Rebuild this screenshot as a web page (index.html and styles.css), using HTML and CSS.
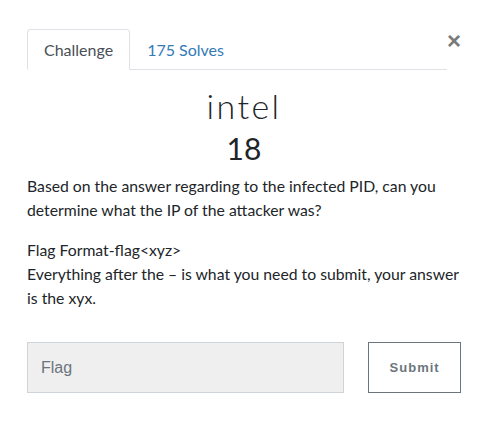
FILE: index.html
```html
<!DOCTYPE html>
<html>
<head>
<meta charset="utf-8">
<link rel="stylesheet" href="styles.css">
</head>
<body>
<div class="modal">
  <div class="header">
    <ul class="tabs">
      <li class="tab active">Challenge</li>
      <li class="tab link">175 Solves</li>
    </ul>
    <button class="close">&times;</button>
  </div>
  <h2 class="title">intel</h2>
  <h3 class="value">18</h3>
  <div class="desc">
    <p>Based on the answer regarding to the infected PID, can you determine what the IP of the attacker was?</p>
    <p>Flag Format-flag&lt;xyz&gt;<br>Everything after the – is what you need to submit, your answer is the xyx.</p>
  </div>
  <div class="form">
    <input class="flag" type="text" placeholder="Flag">
    <button class="submit">Submit</button>
  </div>
</div>
</body>
</html>
```
FILE: styles.css
```css
* { box-sizing: border-box; }
body {
  margin: 0;
  background: #fff;
  font-family: Lato, "Open Sans", sans-serif;
  color: #212529;
}
.modal {
  padding: 29px 27px 0 27px;
}
.header {
  display: flex;
  align-items: flex-start;
}
.tabs {
  flex: 1;
  display: flex;
  list-style: none;
  margin: 0;
  padding: 0;
  border-bottom: 1px solid #dee2e6;
}
.tab {
  height: 41px;
  padding: 0 16px;
  font-size: 16px;
  line-height: 40px;
  margin-bottom: -1px;
  border: 1px solid transparent;
  border-radius: 4px 4px 0 0;
}
.tab.active {
  color: #495057;
  border-color: #dee2e6 #dee2e6 #fff;
  background: #fff;
}
.tab.link {
  color: #337ab7;
}
.close {
  border: 0;
  background: none;
  padding: 0;
  margin: 0;
  width: 14px;
  font-size: 24px;
  font-weight: 700;
  line-height: 24px;
  color: #7a7a7a;
  font-family: "Liberation Sans", sans-serif;
}
.title {
  margin: 14px 0 0;
  text-align: center;
  font-size: 34px;
  font-weight: 300;
  letter-spacing: 2.4px;
  line-height: 44px;
}
.value {
  margin: 0;
  text-align: center;
  font-size: 30px;
  font-weight: 400;
  line-height: 40px;
}
.desc {
  margin-top: 6px;
  font-size: 15.75px;
  line-height: 24px;
}
.desc p {
  margin: 0 0 16px;
}
.form {
  display: flex;
  margin-top: 32px;
  gap: 24px;
}
.flag {
  width: 318px;
  height: 51px;
  border: 1px solid #ced4da;
  background: #efefef;
  padding: 0 13px;
  font-family: "Liberation Sans", Arial, sans-serif;
  font-size: 16px;
  color: #495057;
}
.flag::placeholder { color: #6c757d; }
.submit {
  width: 93px;
  height: 51px;
  border: 1px solid #6c757d;
  background: #fff;
  color: #6c757d;
  font-family: "Liberation Sans", Arial, sans-serif;
  font-weight: 700;
  font-size: 13px;
  letter-spacing: 1px;
}
```
